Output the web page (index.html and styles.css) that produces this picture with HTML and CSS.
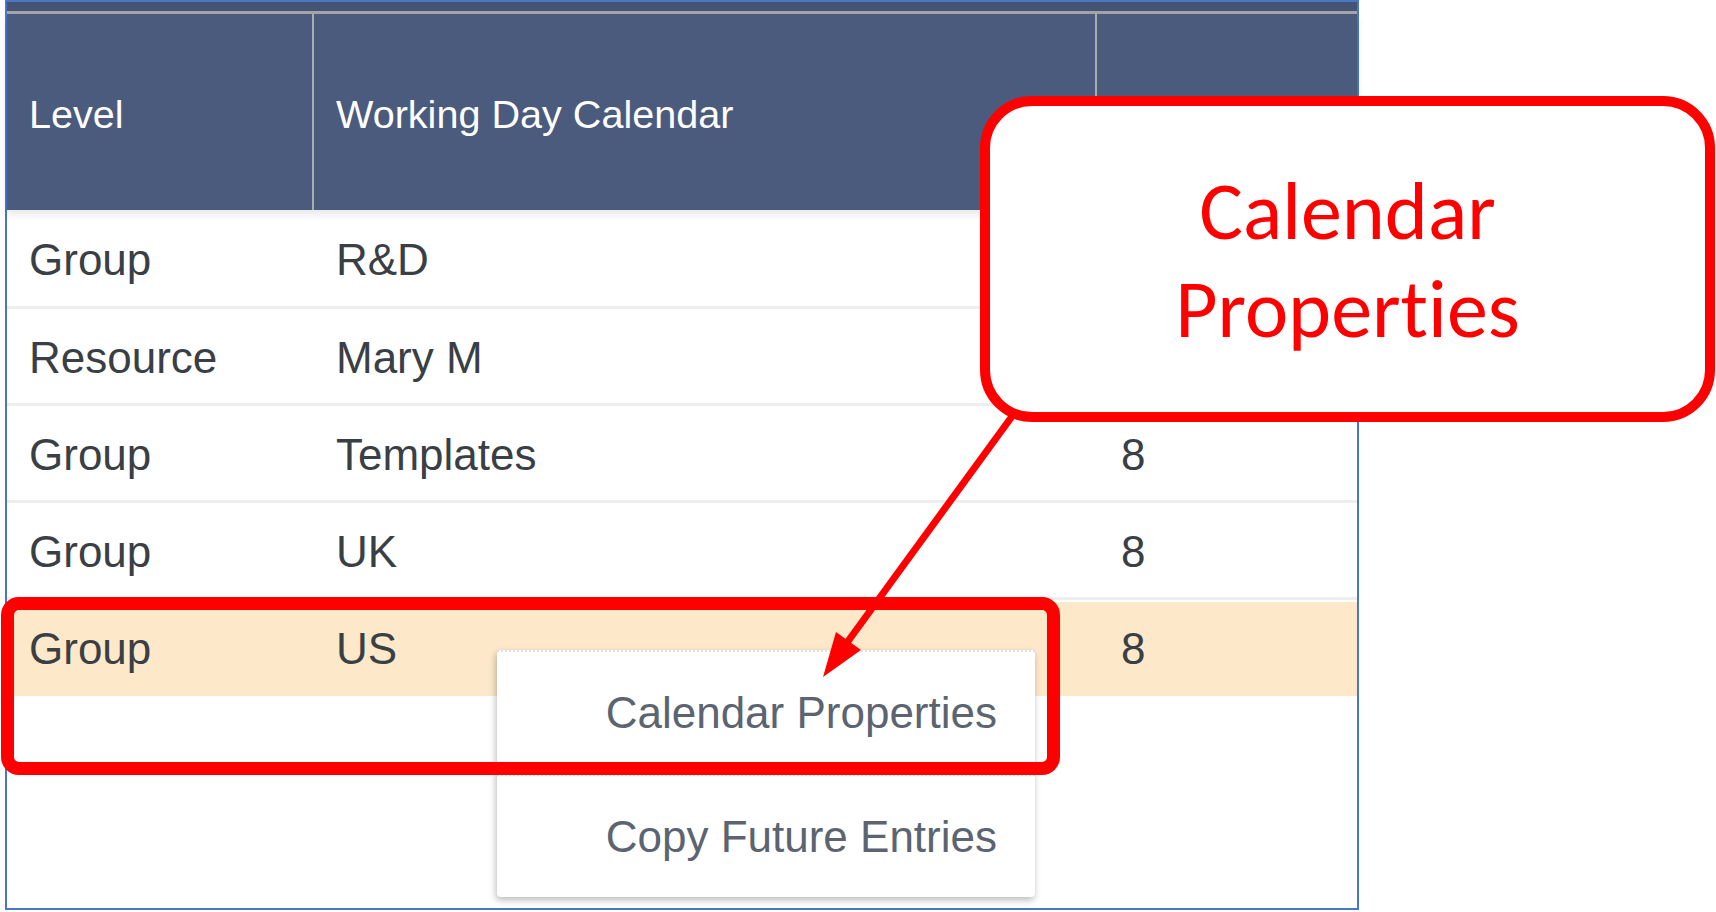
FILE: index.html
```html
<!DOCTYPE html>
<html lang="en">
<head>
    <meta charset="UTF-8">
    <meta name="viewport" content="width=device-width, initial-scale=1.0">
    <title>Working Day Calendars</title>
    <link rel="stylesheet" href="styles.css">
</head>
<body>
    <div class="stage">
        <div class="grid-frame">
            <div class="grid-topbar"></div>
            <div class="grid-head">
                <div class="head-cell">Level</div>
                <div class="head-cell">Working Day Calendar</div>
                <div class="head-cell">Hours</div>
            </div>
            <div class="grid-body">
                <div class="grid-row">
                    <div class="cell">Group</div>
                    <div class="cell">R&amp;D</div>
                    <div class="cell">8</div>
                </div>
                <div class="grid-row">
                    <div class="cell">Resource</div>
                    <div class="cell">Mary M</div>
                    <div class="cell">8</div>
                </div>
                <div class="grid-row">
                    <div class="cell">Group</div>
                    <div class="cell">Templates</div>
                    <div class="cell">8</div>
                </div>
                <div class="grid-row">
                    <div class="cell">Group</div>
                    <div class="cell">UK</div>
                    <div class="cell">8</div>
                </div>
                <div class="grid-row selected">
                    <div class="cell">Group</div>
                    <div class="cell">US</div>
                    <div class="cell">8</div>
                </div>
            </div>
        </div>

        <!-- right-click menu on the selected row -->
        <div class="context-menu">
            <div class="menu-item">Calendar Properties</div>
            <div class="menu-item">Copy Future Entries</div>
        </div>

        <!-- annotation layer -->
        <div class="row-highlight"></div>
        <svg class="pointer" width="1716" height="912" viewBox="0 0 1716 912">
            <line x1="1013" y1="415" x2="846" y2="644" stroke="#ff0000" stroke-width="7"/>
            <polygon points="823,677 836,632 861,650" fill="#ff0000"/>
        </svg>
        <div class="callout">
            <span>Calendar</span>
            <span>Properties</span>
        </div>
    </div>
</body>
</html>
```
FILE: styles.css
```css
body {
    margin: 0;
    background-color: white;
    font-family: "Liberation Sans", Arial, sans-serif;
}
.stage {
    position: relative;
    width: 1716px;
    height: 912px;
    overflow: hidden;
}
.grid-frame {
    margin-left: 5px;
    width: 1354px;
    height: 910px;
    box-sizing: border-box;
    border: 2px solid #4a76c4;
}
.grid-topbar {
    height: 9px;
    background-color: #465473;
    border-bottom: 3px solid #a3a6ab;
}
.grid-head {
    display: grid;
    grid-template-columns: 307px 783px 260px;
    height: 196px;
    background-color: #4b5b7d;
    box-shadow: 0 4px 8px rgba(0, 0, 0, 0.1);
    position: relative;
}
.head-cell {
    display: flex;
    align-items: center;
    padding-left: 22px;
    padding-top: 5px;
    border-right: 2px solid #a9acb1;
    color: white;
    font-size: 39.6px;
    white-space: nowrap;
    overflow: hidden;
}
.head-cell:last-child {
    border-right: none;
}
.grid-row {
    display: grid;
    grid-template-columns: 307px 783px 260px;
    height: 97px;
    box-sizing: border-box;
    border-bottom: 3px solid #eeeeee;
}
.grid-row:first-child {
    height: 99px;
}
.grid-row.selected {
    background-color: #fde9c9;
    border-bottom: none;
    margin-top: 2px;
    height: 94px;
}
.cell {
    display: flex;
    align-items: center;
    padding-left: 22px;
    padding-top: 3px;
    color: #3a3f45;
    font-size: 44px;
    white-space: nowrap;
}
.cell:last-child {
    padding-left: 24px;
}
.selected .cell {
    padding-top: 0;
}
.context-menu {
    position: absolute;
    left: 497px;
    top: 650px;
    width: 538px;
    background-color: white;
    border-radius: 4px;
    box-shadow: -1px 3px 7px rgba(0, 0, 0, 0.28);
}
.menu-item {
    height: 124px;
    box-sizing: border-box;
    border-top: 2px dotted #dde0e4;
    display: flex;
    align-items: center;
    justify-content: flex-end;
    padding-right: 38px;
    color: #5b6470;
    font-size: 44px;
}
.menu-item:last-child {
    height: 123px;
}
.row-highlight {
    position: absolute;
    left: 1px;
    top: 597px;
    width: 1059px;
    height: 178px;
    box-sizing: border-box;
    border: 13px solid #ff0000;
    border-radius: 18px;
}
.pointer {
    position: absolute;
    left: 0;
    top: 0;
}
.callout {
    position: absolute;
    left: 980px;
    top: 96px;
    width: 735px;
    height: 326px;
    box-sizing: border-box;
    border: 10px solid #ff0000;
    border-radius: 52px;
    background-color: white;
    display: flex;
    flex-direction: column;
    align-items: center;
    justify-content: center;
    padding-top: 2px;
    color: #ff0000;
    font-family: Carlito, Lato, sans-serif;
    font-size: 82px;
    line-height: 98px;
    font-variant-ligatures: none;
}
```
